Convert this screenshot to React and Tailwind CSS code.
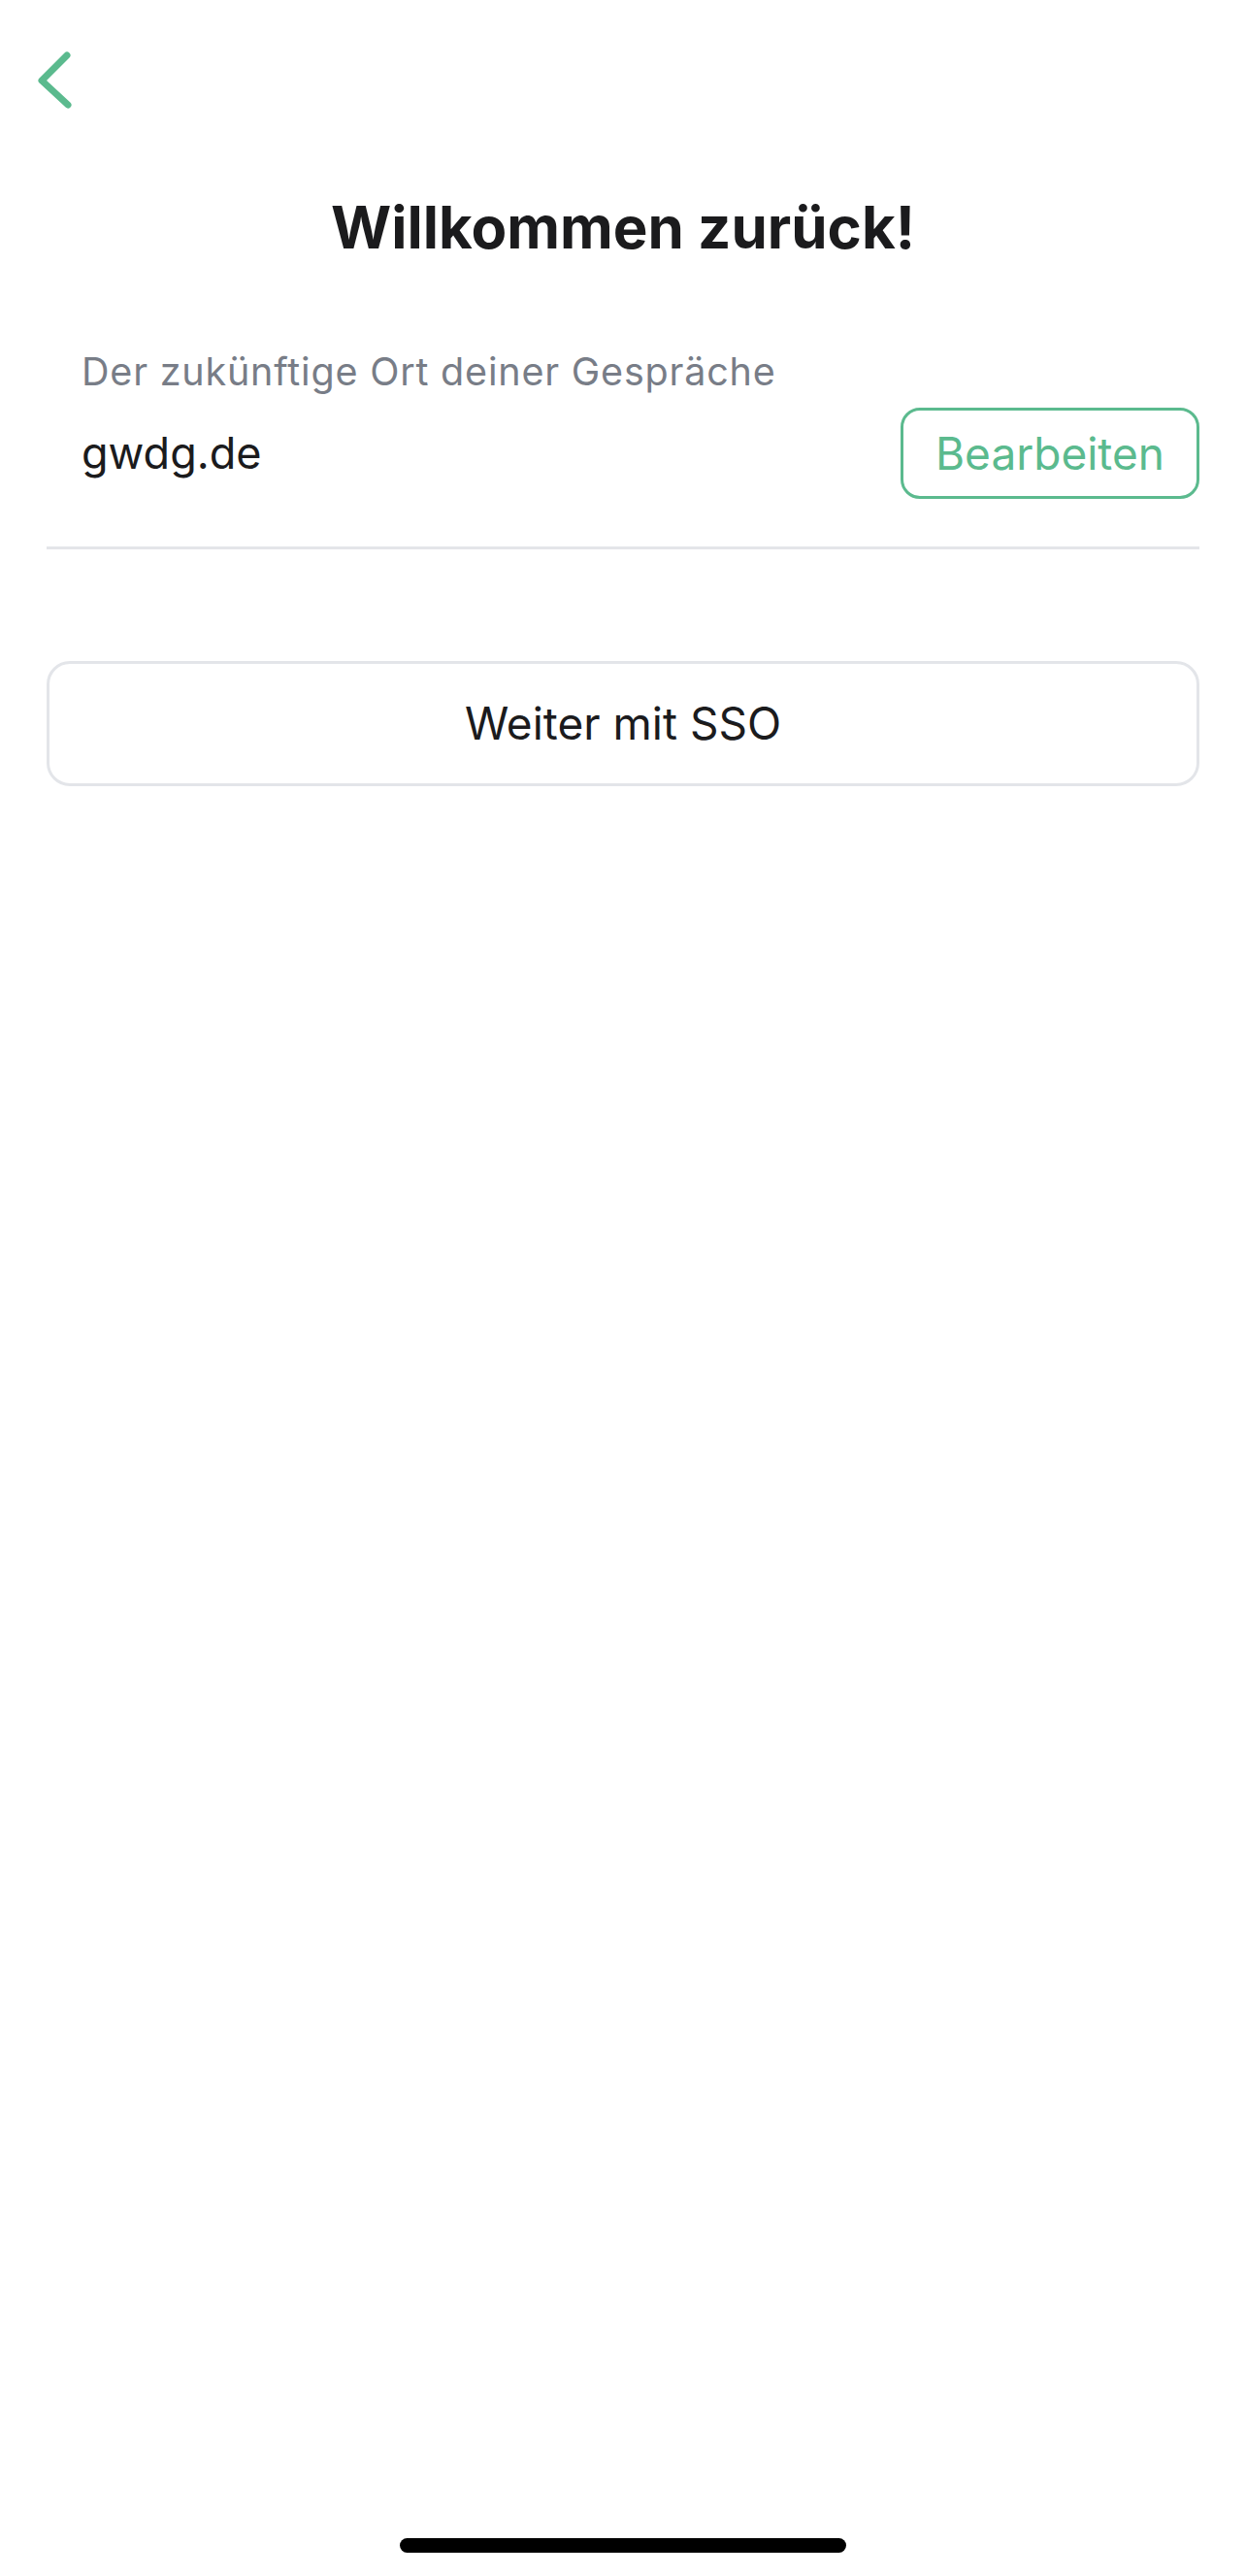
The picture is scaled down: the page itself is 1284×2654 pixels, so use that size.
import React from 'react';

const GREEN = '#5bba8e';

const BackChevron = () => (
    <svg width="40" height="64" viewBox="0 0 40 64" fill="none" className="block">
        <path
            d="M33 7 L7 33 L34 58"
            stroke={GREEN}
            strokeWidth="7"
            strokeLinecap="round"
            strokeLinejoin="round"
        />
    </svg>
);

const App = () => {
    return (
        <div className="relative w-full min-h-[2654px] bg-white font-['Inter','Liberation_Sans',sans-serif] text-[#1b1b1d]">
            {/* back button */}
            <div className="pt-[50px] pl-[36px]">
                <button type="button" className="block">
                    <BackChevron />
                </button>
            </div>

            <h1 className="mt-[90px] text-center text-[60px] font-bold leading-none">
                Willkommen zurück!
            </h1>

            <div className="px-[48px]">
                <div className="mt-[100px] pl-[36px] text-[39.5px] leading-none tracking-[0.8px] text-[#787d87]">
                    Der zukünftige Ort deiner Gespräche
                </div>

                <div className="mt-[16px] flex items-center justify-between">
                    <span className="pl-[36px] text-[45px] leading-none">gwdg.de</span>
                    <button
                        type="button"
                        className="flex h-[94px] w-[308px] items-center justify-center rounded-[20px] border-[3px] border-[#5bba8e] text-[46px] leading-none text-[#5bba8e]"
                    >
                        Bearbeiten
                    </button>
                </div>

                <div className="mt-[49px] h-[3px] bg-[#e4e5e9]" />

                <button
                    type="button"
                    className="mt-[115px] flex h-[129px] w-full items-center justify-center rounded-[24px] border-[3px] border-[#e3e5e9] text-[46px] leading-none"
                >
                    Weiter mit SSO
                </button>
            </div>

            {/* home indicator */}
            <div className="absolute bottom-[24px] left-1/2 h-[15px] w-[460px] -translate-x-1/2 rounded-full bg-black" />
        </div>
    );
};

export default App;
